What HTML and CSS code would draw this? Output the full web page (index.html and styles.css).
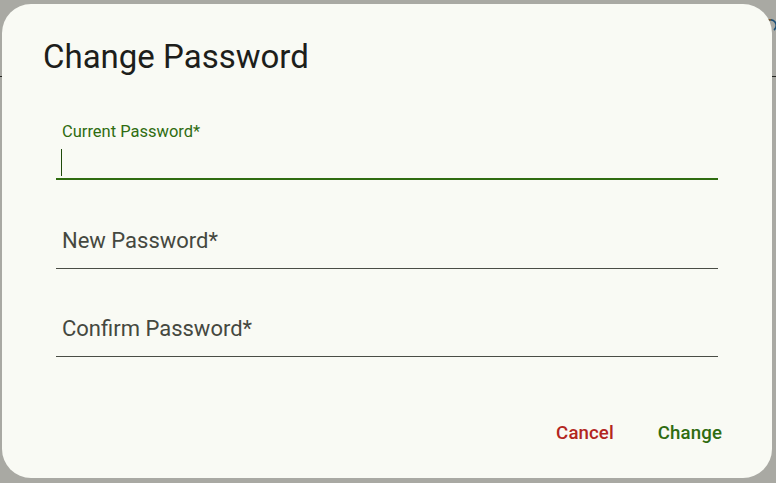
FILE: index.html
```html
<!DOCTYPE html>
<html>
<head>
<meta charset="utf-8">
<link rel="stylesheet" href="styles.css">
</head>
<body>
<div class="page">
  <header class="appbar">
    <svg class="bar-icon" width="12" height="16" viewBox="0 0 12 16"><path d="M2 3 A5 5 0 0 1 9 12" fill="none" stroke="#1f6fb0" stroke-width="1.6"/><path d="M2 3 A4 4 0 0 1 6 2" fill="none" stroke="#c0782a" stroke-width="1.6"/></svg>
  </header>
</div>
<div class="scrim"></div>
<div class="dialog">
  <h1 class="title">Change Password</h1>
  <form class="fields">
    <div class="field focused">
      <span class="float-label">Current Password*</span>
      <span class="caret"></span>
    </div>
    <div class="field">
      <span class="placeholder">New Password*</span>
    </div>
    <div class="field last">
      <span class="placeholder">Confirm Password*</span>
    </div>
  </form>
  <div class="actions">
    <button type="button" class="btn cancel">Cancel</button>
    <button type="button" class="btn ok">Change</button>
  </div>
</div>
</body>
</html>
```

FILE: styles.css
```css
html, body {
  margin: 0;
  padding: 0;
  width: 776px;
  height: 483px;
  overflow: hidden;
  background: #fafbf5;
  font-family: Roboto, "Noto Sans", sans-serif;
}
.page {
  height: 483px;
}
.appbar {
  height: 76px;
  border-bottom: 1px solid #2c2d2a;
  position: relative;
}
.bar-icon {
  position: absolute;
  left: 765px;
  top: 18px;
}
.scrim {
  position: absolute;
  inset: 0;
  background: rgba(24, 26, 20, 0.36);
}
.dialog {
  position: absolute;
  left: 2px;
  top: 4px;
  width: 770px;
  height: 474px;
  border-radius: 29px;
  background: #f9faf4;
  box-sizing: border-box;
  padding: 0 54px 0 54px;
  display: flex;
  flex-direction: column;
}
.title {
  margin: 0 0 0 -13px;
  padding: 33px 0 0 0;
  font-size: 33px;
  font-weight: 400;
  line-height: 40px;
  color: #1d1e1b;
}
.fields {
  margin: 0;
  display: flex;
  flex-direction: column;
}
.field {
  height: 89px;
  border-bottom: 1px solid #4a4d45;
  display: flex;
  flex-direction: column;
  justify-content: flex-end;
  padding-left: 6px;
  box-sizing: border-box;
}
.field.last {
  height: 88px;
}
.field.focused {
  height: 103px;
  border-bottom: 2px solid #2f6c10;
  justify-content: flex-start;
  padding-top: 45px;
}
.float-label {
  font-size: 16.5px;
  line-height: 20px;
  color: #2f6c10;
}
.caret {
  display: block;
  width: 1px;
  height: 27px;
  margin-top: 7px;
  margin-left: -1px;
  background: #1f4a0a;
}
.placeholder {
  font-size: 22px;
  line-height: 24px;
  color: #45483f;
  padding-bottom: 15px;
}
.actions {
  display: flex;
  justify-content: flex-end;
  gap: 20px;
  margin-top: 64px;
  margin-right: -4px;
}
.btn {
  border: none;
  background: none;
  padding: 0;
  font-family: Roboto, "Noto Sans", sans-serif;
  font-size: 18.67px;
  font-weight: 500;
  line-height: 24px;
  letter-spacing: 0.1px;
  cursor: pointer;
}
.cancel { color: #b3261e; margin-right: 24px; }
.ok { color: #2f6c10; }
```
